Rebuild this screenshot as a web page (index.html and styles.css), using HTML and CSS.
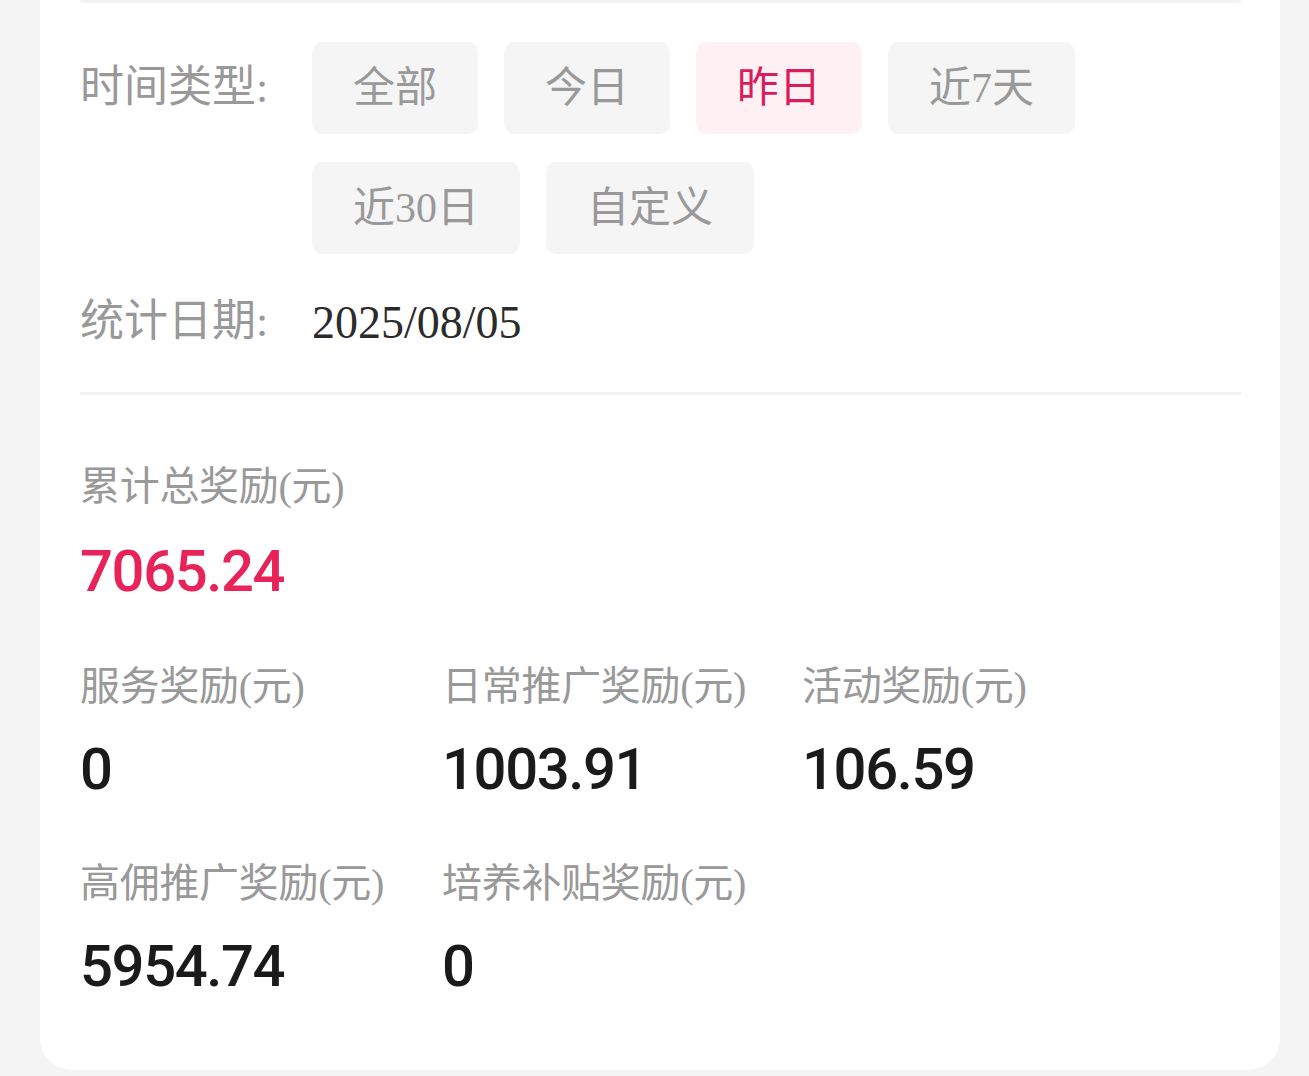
FILE: index.html
```html
<!DOCTYPE html>
<html lang="zh-CN">

<head>
    <meta charset="UTF-8">
    <meta name="viewport" content="width=device-width, initial-scale=1.0">
    <title>奖励统计</title>
    <link rel="stylesheet" href="styles.css">
</head>

<body>
    <main class="card">
        <div class="top-line"></div>

        <section class="filter-row">
            <span class="filter-label">时间类型:</span>
            <div class="filter-options">
                <button type="button" class="btn-filtro">全部</button>
                <button type="button" class="btn-filtro">今日</button>
                <button type="button" class="btn-filtro ativo">昨日</button>
                <button type="button" class="btn-filtro">近7天</button>
                <button type="button" class="btn-filtro">近30日</button>
                <button type="button" class="btn-filtro">自定义</button>
            </div>
        </section>

        <section class="date-row">
            <span class="filter-label">统计日期:</span>
            <span class="date-value">2025/08/05</span>
        </section>

        <hr class="divider">

        <section class="total-section">
            <p class="stat-label">累计总奖励(元)</p>
            <p class="stat-value total">7065.24</p>
        </section>

        <section class="stats-grid">
            <div class="stat-item">
                <p class="stat-label">服务奖励(元)</p>
                <p class="stat-value">0</p>
            </div>
            <div class="stat-item">
                <p class="stat-label">日常推广奖励(元)</p>
                <p class="stat-value">1003.91</p>
            </div>
            <div class="stat-item">
                <p class="stat-label">活动奖励(元)</p>
                <p class="stat-value">106.59</p>
            </div>
            <div class="stat-item">
                <p class="stat-label">高佣推广奖励(元)</p>
                <p class="stat-value">5954.74</p>
            </div>
            <div class="stat-item">
                <p class="stat-label">培养补贴奖励(元)</p>
                <p class="stat-value">0</p>
            </div>
        </section>
    </main>
</body>

</html>
```

FILE: styles.css
```css
* {
    margin: 0;
    padding: 0;
    box-sizing: border-box;
}

body {
    font-family: 'Liberation Serif', 'Noto Sans CJK SC', serif;
    background-color: #f4f4f4;
    color: #999;
}

.card {
    width: 1240px;
    height: 1070px;
    margin-left: 40px;
    padding: 0 39px 0 40px;
    background-color: #fff;
    border-radius: 0 0 32px 32px;
}

.top-line {
    height: 3px;
    background-color: #f3f3f3;
    border-radius: 0 0 4px 4px;
}

.filter-row {
    display: flex;
    margin-top: 39px;
}

.filter-label {
    flex: none;
    width: 232px;
    font-size: 44px;
    line-height: 92px;
    color: #999;
}

.filter-options {
    display: flex;
    flex-wrap: wrap;
    gap: 28px 26px;
}

.btn-filtro {
    height: 92px;
    padding: 0 41px;
    border: none;
    border-radius: 10px;
    background-color: #f5f5f5;
    color: #999;
    font-family: inherit;
    font-size: 42px;
    line-height: 92px;
    cursor: pointer;
}

.btn-filtro.ativo {
    background-color: #fff0f3;
    color: #d91c5c;
}

.date-row {
    display: flex;
    align-items: center;
    margin-top: 38px;
    height: 60px;
}

.date-row .filter-label {
    line-height: 60px;
}

.date-value {
    font-size: 46px;
    color: #2b2b2b;
}

.divider {
    border: none;
    height: 3px;
    background-color: #f3f3f3;
    margin-top: 40px;
}

.total-section {
    margin-top: 67px;
}

.stat-label {
    font-size: 40px;
    line-height: 50px;
    color: #999;
    white-space: nowrap;
    letter-spacing: -0.3px;
}

.stat-value {
    font-family: 'Roboto', 'Liberation Sans', sans-serif;
    font-weight: 500;
    font-size: 58px;
    line-height: 70px;
    letter-spacing: -1.4px;
    color: #1a1a1a;
    margin-top: 24px;
}

.stat-value.total {
    color: #e8235a;
}

.stats-grid {
    display: grid;
    grid-template-columns: 362px 360px auto;
    row-gap: 55px;
    margin-top: 56px;
}

.stat-item .stat-value {
    margin-top: 22px;
}
```
